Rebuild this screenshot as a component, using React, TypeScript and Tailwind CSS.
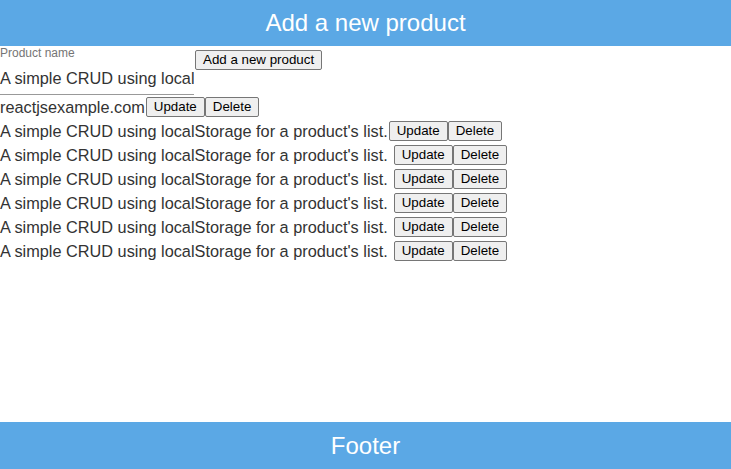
import React from "react";

const items = [
  { name: "reactjsexample.com", gap: false },
  { name: "A simple CRUD using localStorage for a product's list.", gap: false },
  { name: "A simple CRUD using localStorage for a product's list.", gap: true },
  { name: "A simple CRUD using localStorage for a product's list.", gap: true },
  { name: "A simple CRUD using localStorage for a product's list.", gap: true },
  { name: "A simple CRUD using localStorage for a product's list.", gap: true },
  { name: "A simple CRUD using localStorage for a product's list.", gap: true },
];

function Btn({ children }: { children: React.ReactNode }) {
  return (
    <button className="h-[20px] px-[7px] border border-[#767676] bg-[#efefef] rounded-[2px] text-[13.33px] leading-none text-black">
      {children}
    </button>
  );
}

export default function App() {
  return (
    <div
      className="flex flex-col h-[469px] bg-white text-[#333]"
      style={{ fontFamily: '"Liberation Sans", Arial, sans-serif' }}
    >
      {/* Header */}
      <div className="h-[46px] shrink-0 bg-[#5ba8e5] flex items-center justify-center">
        <span className="text-white text-[24px]">Add a new product</span>
      </div>

      <div className="flex-1">
        {/* Form */}
        <div className="flex items-start">
          <div className="w-[194px] pt-[1px]">
            <div className="text-[12px] leading-[12px] text-[#757575]">Product name</div>
            <div className="h-[36px] border-b border-[#999] overflow-hidden whitespace-nowrap text-[16.3px] pt-[10px] leading-[18px]">
              A simple CRUD using local
            </div>
          </div>
          <div className="mt-[4px] ml-[1px] flex">
            <Btn>Add a new product</Btn>
          </div>
        </div>

        {/* List */}
        <div className="mt-[2px] flex flex-col gap-[4px]">
          {items.map((it, i) => (
            <div key={i} className="flex items-center h-[20px] text-[16.3px] whitespace-nowrap">
              <span>{it.name}</span>
              <span className={it.gap ? "ml-[6px] flex" : "ml-[1px] flex"}>
                <Btn>Update</Btn>
                <Btn>Delete</Btn>
              </span>
            </div>
          ))}
        </div>
      </div>

      {/* Footer */}
      <div className="h-[47px] shrink-0 bg-[#5ba8e5] flex items-center justify-center">
        <span className="text-white text-[24px]">Footer</span>
      </div>
    </div>
  );
}
